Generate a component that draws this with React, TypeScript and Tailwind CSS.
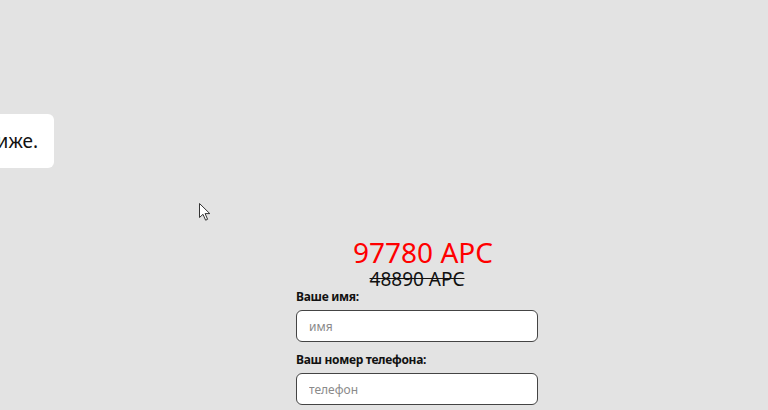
import React from 'react';

function Cursor() {
  return (
    <svg
      className="absolute left-[199px] top-[203px]"
      width="13"
      height="19"
      viewBox="0 0 13 19"
    >
      <path
        d="M0.5 0.5 L0.5 14.5 L4 11.3 L6.6 17.2 L8.6 16.3 L6.1 10.6 L10.8 10.6 Z"
        fill="#ffffff"
        stroke="#333333"
        strokeWidth="1"
        strokeLinejoin="round"
      />
    </svg>
  );
}

function Field({ label, placeholder }: { label: string; placeholder: string }) {
  return (
    <div className="flex flex-col">
      <label className="text-[12px] font-bold leading-[14px] tracking-[-0.3px] text-[#111]">{label}</label>
      <input
        type="text"
        placeholder={placeholder}
        className="mt-[6px] h-[32px] w-full rounded-[6px] border border-[#444] bg-white px-[12px] text-[12px] text-[#333] placeholder:text-[#8a8a8a] outline-none"
      />
    </div>
  );
}

export default function App() {
  return (
    <div
      className="relative h-[410px] w-full overflow-hidden bg-[#e3e3e3]"
      style={{ fontFamily: '"Noto Sans", "DejaVu Sans", sans-serif' }}
    >
      <div className="pt-[114px]">
        <div className="-ml-[246px] flex h-[54px] w-[300px] items-center justify-end rounded-[6px] bg-white pr-[16px]">
          <span className="whitespace-nowrap text-[19px] text-[#111]">Подробности ниже.</span>
        </div>
      </div>

      <div className="ml-[296px] mt-[69px] w-[242px]">
        <div className="flex flex-col items-center">
          <span className="pl-[12px] text-[28px] leading-[30px] text-[#ff0000]">97780 APC</span>
          <span className="mt-[1px] text-[19px] leading-[22px] text-[#111] line-through">48890 APC</span>
        </div>
        <div className="flex flex-col gap-[11px]">
          <Field label="Ваше имя:" placeholder="имя" />
          <Field label="Ваш номер телефона:" placeholder="телефон" />
        </div>
      </div>

      <Cursor />
    </div>
  );
}
